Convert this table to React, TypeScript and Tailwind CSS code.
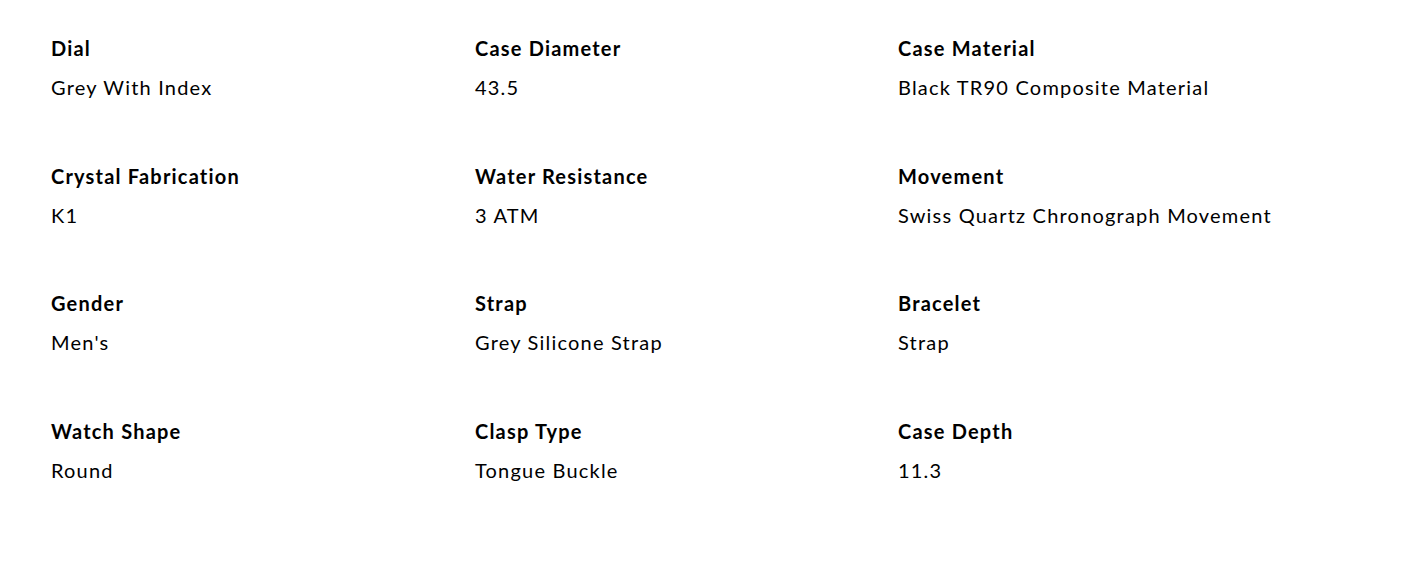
const specs = [
  { label: "Dial", value: "Grey With Index" },
  { label: "Case Diameter", value: "43.5" },
  { label: "Case Material", value: "Black TR90 Composite Material" },
  { label: "Crystal Fabrication", value: "K1" },
  { label: "Water Resistance", value: "3 ATM" },
  { label: "Movement", value: "Swiss Quartz Chronograph Movement" },
  { label: "Gender", value: "Men's" },
  { label: "Strap", value: "Grey Silicone Strap" },
  { label: "Bracelet", value: "Strap" },
  { label: "Watch Shape", value: "Round" },
  { label: "Clasp Type", value: "Tongue Buckle" },
  { label: "Case Depth", value: "11.3" },
];

export default function App() {
  return (
    <div className="min-h-[565px] w-full bg-white font-['Lato',sans-serif] text-black">
      <div className="grid grid-cols-[424px_423px_1fr] gap-y-[60.5px] pl-[51px] pt-[34px]">
        {specs.map((s) => (
          <div key={s.label} className="flex flex-col gap-[11px]">
            <div className="text-[20px] font-bold leading-[28px] tracking-[1.2px]">{s.label}</div>
            <div className="text-[20px] leading-[28px] tracking-[1.2px]">{s.value}</div>
          </div>
        ))}
      </div>
    </div>
  );
}
